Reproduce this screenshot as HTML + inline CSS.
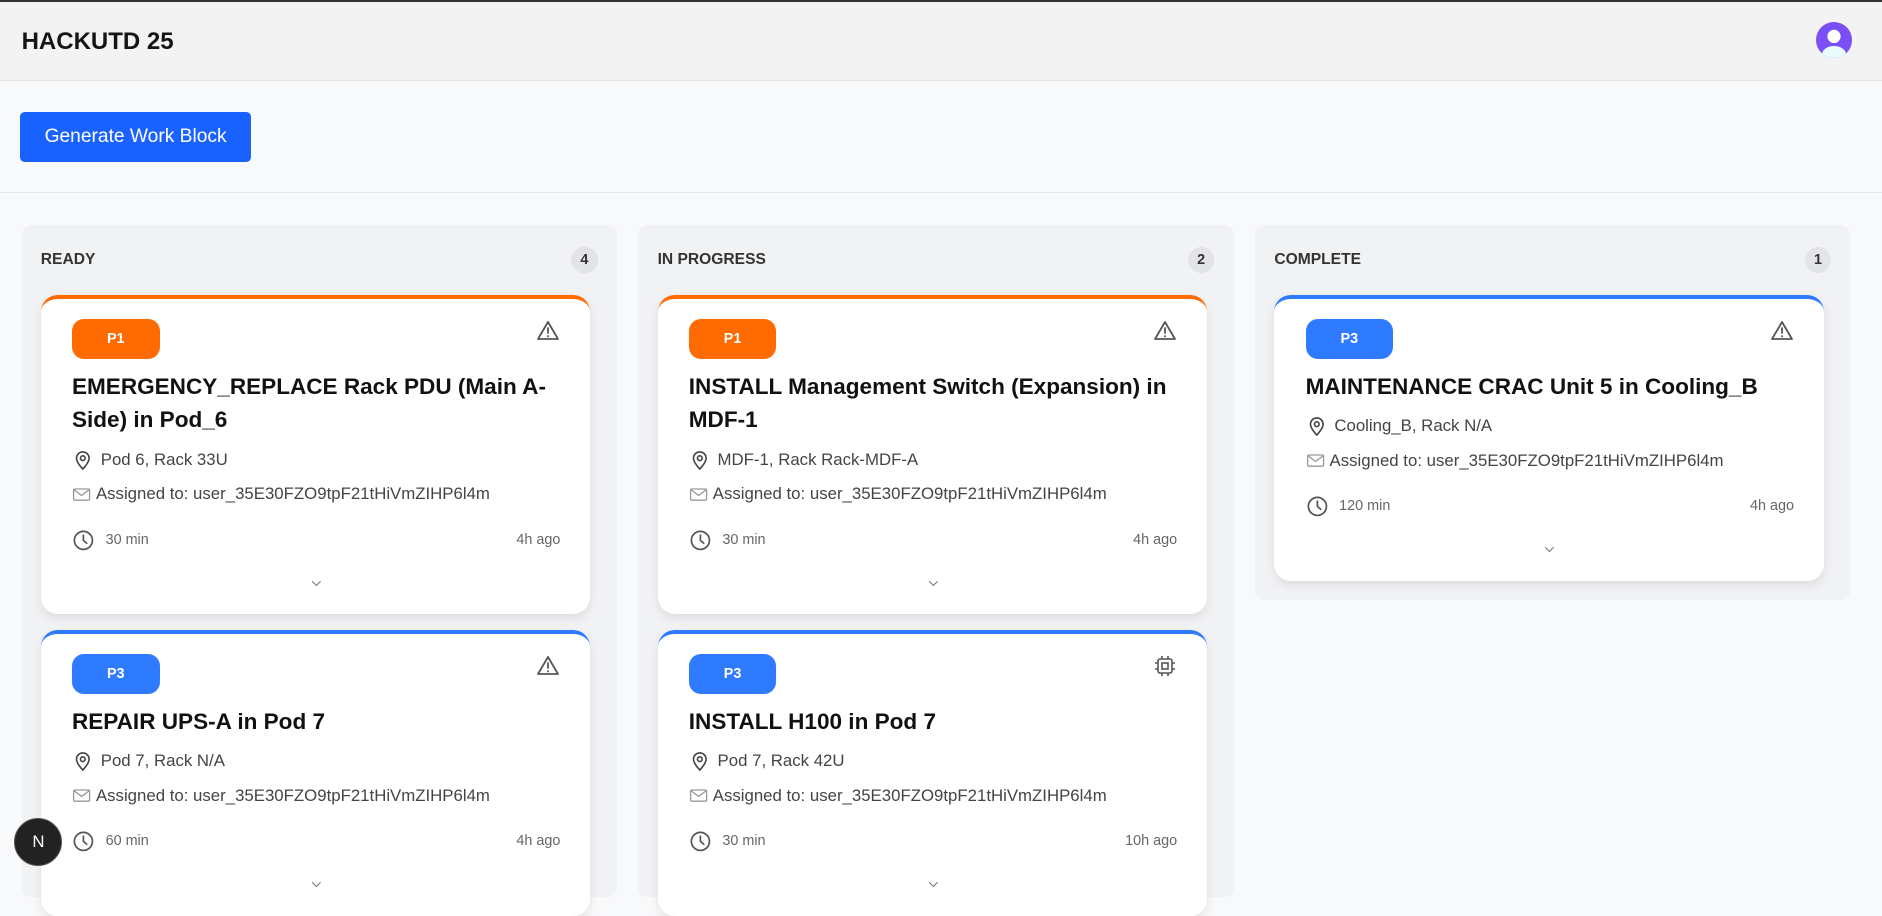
<!DOCTYPE html>
<html><head><meta charset="utf-8"><style>
html{zoom:1.2}
*{box-sizing:border-box;margin:0;padding:0}
body{width:1568px;height:736px;overflow:hidden;background:#f8f9fa;font-family:"Liberation Sans",Arial,sans-serif;position:relative;border-top:2px solid #333}
.hdr{height:66px;background:#f3f3f3;border-bottom:1px solid #e4e4e4;position:relative}
.hdr h1{position:absolute;left:18px;top:22px;font-size:20px;font-weight:700;color:#151515}
.av{position:absolute;left:1513px;top:17px;width:30px;height:30px;border-radius:50%;background:#7a4ff5;overflow:hidden}
.bar{height:93px;border-bottom:1px solid #e6e7ea;position:relative}
.btn{position:absolute;left:17px;top:26px;width:192px;height:41px;background:#1a62ff;border-radius:4px;color:#fff;font-size:16px;display:flex;align-items:center;justify-content:center}
.col{position:absolute;top:186px;width:496px;background:#f1f2f4;border-radius:8px;padding:0 22px 0 16px}
.ch{height:58px;display:flex;align-items:center;justify-content:space-between;font-size:13px;font-weight:700;color:#333}
.cnt{width:22px;height:22px;border-radius:50%;background:#e3e4e7;font-size:12px;display:flex;align-items:center;justify-content:center;margin-right:-6px}
.card{background:#fff;border-radius:14px;border-top:4px solid #ff6b00;box-shadow:0 3px 8px rgba(0,0,0,.09);padding:17px 25px 0 26px;position:relative;margin-bottom:13px}
.card.b{border-top-color:#2f7bff}
.pill{width:73px;height:33px;border-radius:10px;background:#ff6b00;color:#fff;font-size:12px;font-weight:700;display:flex;align-items:center;justify-content:center}
.b .pill{background:#2f7bff}
.ic{position:absolute;right:25px;top:17px}
.t{margin-top:9px;font-size:18.8px;font-weight:700;line-height:28px;color:#111;white-space:nowrap}
.row{display:flex;align-items:center;height:20px;font-size:14px;color:#444;margin-top:9px;white-space:nowrap}
.row svg{margin-right:6px}
.ft{display:flex;align-items:center;justify-content:space-between;height:20px;margin-top:18px;font-size:12px;color:#666}
.ft span{display:flex;align-items:center}
.cv{height:52px;display:flex;justify-content:center;padding-top:19px}
.nx{position:absolute;left:12px;top:680px;width:40px;height:40px;border-radius:50%;background:#222;border:1px solid #555;color:#fff;font-size:14px;display:flex;align-items:center;justify-content:center}
</style></head><body>
<div class="hdr"><h1>HACKUTD 25</h1><div class="av"><svg width="30" height="30"><circle cx="15" cy="12" r="5.5" fill="#fff"/><ellipse cx="15" cy="27" rx="10" ry="7" fill="#e8fbff"/></svg></div></div>
<div class="bar"><div class="btn">Generate Work Block</div></div>

<svg width="0" height="0" style="position:absolute"><defs>
<symbol id="w" viewBox="0 0 24 24"><path d="M12 3L2 20h20z M12 9v5 M12 17v.5" fill="none" stroke="#555" stroke-width="1.8" stroke-linejoin="round" stroke-linecap="round"/></symbol>
<symbol id="p" viewBox="0 0 24 24"><path d="M12 22s-7-7-7-12a7 7 0 0 1 14 0c0 5-7 12-7 12z" fill="none" stroke="#444" stroke-width="1.8"/><circle cx="12" cy="10" r="2.6" fill="none" stroke="#444" stroke-width="1.8"/></symbol>
<symbol id="m" viewBox="0 0 24 24"><rect x="2" y="5" width="20" height="14" rx="1.5" fill="none" stroke="#999" stroke-width="1.6"/><path d="M2.5 6l9.5 7 9.5-7" fill="none" stroke="#999" stroke-width="1.6"/></symbol>
<symbol id="c" viewBox="0 0 24 24"><circle cx="12" cy="12" r="9.5" fill="none" stroke="#555" stroke-width="1.8"/><path d="M12 6.5V12l3.5 3" fill="none" stroke="#555" stroke-width="1.8" stroke-linecap="round"/></symbol>
<symbol id="d" viewBox="0 0 24 24"><path d="M6 9l6 6 6-6" fill="none" stroke="#777" stroke-width="1.5"/></symbol>
<symbol id="u" viewBox="0 0 24 24"><rect x="5" y="5" width="14" height="14" rx="2" fill="none" stroke="#555" stroke-width="1.6"/><rect x="9" y="9" width="6" height="6" fill="none" stroke="#555" stroke-width="1.6"/><path d="M9 2v3M15 2v3M9 19v3M15 19v3M2 9h3M2 15h3M19 9h3M19 15h3" stroke="#555" stroke-width="1.6"/></symbol>
</defs></svg>

<div class="col" style="left:18px;height:560px">
<div class="ch"><span>READY</span><span class="cnt">4</span></div>
<div class="card"><div class="pill">P1</div><svg class="ic" width="20" height="20"><use href="#w"/></svg>
<div class="t">EMERGENCY_REPLACE Rack PDU (Main A-<br>Side) in Pod_6</div>
<div class="row"><svg width="18" height="20"><use href="#p"/></svg>Pod 6, Rack 33U</div>
<div class="row"><svg width="16" height="16" style="margin-right:4px"><use href="#m"/></svg>Assigned to: user_35E30FZO9tpF21tHiVmZIHP6l4m</div>
<div class="ft"><span><svg width="19" height="19" style="margin-right:9px"><use href="#c"/></svg>30 min</span><span>4h ago</span></div>
<div class="cv"><svg width="14" height="14"><use href="#d"/></svg></div></div>
<div class="card b"><div class="pill">P3</div><svg class="ic" width="20" height="20"><use href="#w"/></svg>
<div class="t">REPAIR UPS-A in Pod 7</div>
<div class="row"><svg width="18" height="20"><use href="#p"/></svg>Pod 7, Rack N/A</div>
<div class="row"><svg width="16" height="16" style="margin-right:4px"><use href="#m"/></svg>Assigned to: user_35E30FZO9tpF21tHiVmZIHP6l4m</div>
<div class="ft"><span><svg width="19" height="19" style="margin-right:9px"><use href="#c"/></svg>60 min</span><span>4h ago</span></div>
<div class="cv"><svg width="14" height="14"><use href="#d"/></svg></div></div>
</div>

<div class="col" style="left:532px;height:560px">
<div class="ch"><span>IN PROGRESS</span><span class="cnt">2</span></div>
<div class="card"><div class="pill">P1</div><svg class="ic" width="20" height="20"><use href="#w"/></svg>
<div class="t">INSTALL Management Switch (Expansion) in<br>MDF-1</div>
<div class="row"><svg width="18" height="20"><use href="#p"/></svg>MDF-1, Rack Rack-MDF-A</div>
<div class="row"><svg width="16" height="16" style="margin-right:4px"><use href="#m"/></svg>Assigned to: user_35E30FZO9tpF21tHiVmZIHP6l4m</div>
<div class="ft"><span><svg width="19" height="19" style="margin-right:9px"><use href="#c"/></svg>30 min</span><span>4h ago</span></div>
<div class="cv"><svg width="14" height="14"><use href="#d"/></svg></div></div>
<div class="card b"><div class="pill">P3</div><svg class="ic" width="20" height="20"><use href="#u"/></svg>
<div class="t">INSTALL H100 in Pod 7</div>
<div class="row"><svg width="18" height="20"><use href="#p"/></svg>Pod 7, Rack 42U</div>
<div class="row"><svg width="16" height="16" style="margin-right:4px"><use href="#m"/></svg>Assigned to: user_35E30FZO9tpF21tHiVmZIHP6l4m</div>
<div class="ft"><span><svg width="19" height="19" style="margin-right:9px"><use href="#c"/></svg>30 min</span><span>10h ago</span></div>
<div class="cv"><svg width="14" height="14"><use href="#d"/></svg></div></div>
</div>

<div class="col" style="left:1046px;height:312px">
<div class="ch"><span>COMPLETE</span><span class="cnt">1</span></div>
<div class="card b"><div class="pill">P3</div><svg class="ic" width="20" height="20"><use href="#w"/></svg>
<div class="t">MAINTENANCE CRAC Unit 5 in Cooling_B</div>
<div class="row"><svg width="18" height="20"><use href="#p"/></svg>Cooling_B, Rack N/A</div>
<div class="row"><svg width="16" height="16" style="margin-right:4px"><use href="#m"/></svg>Assigned to: user_35E30FZO9tpF21tHiVmZIHP6l4m</div>
<div class="ft"><span><svg width="19" height="19" style="margin-right:9px"><use href="#c"/></svg>120 min</span><span>4h ago</span></div>
<div class="cv"><svg width="14" height="14"><use href="#d"/></svg></div></div>
</div>

<div class="nx">N</div>
</body></html>
